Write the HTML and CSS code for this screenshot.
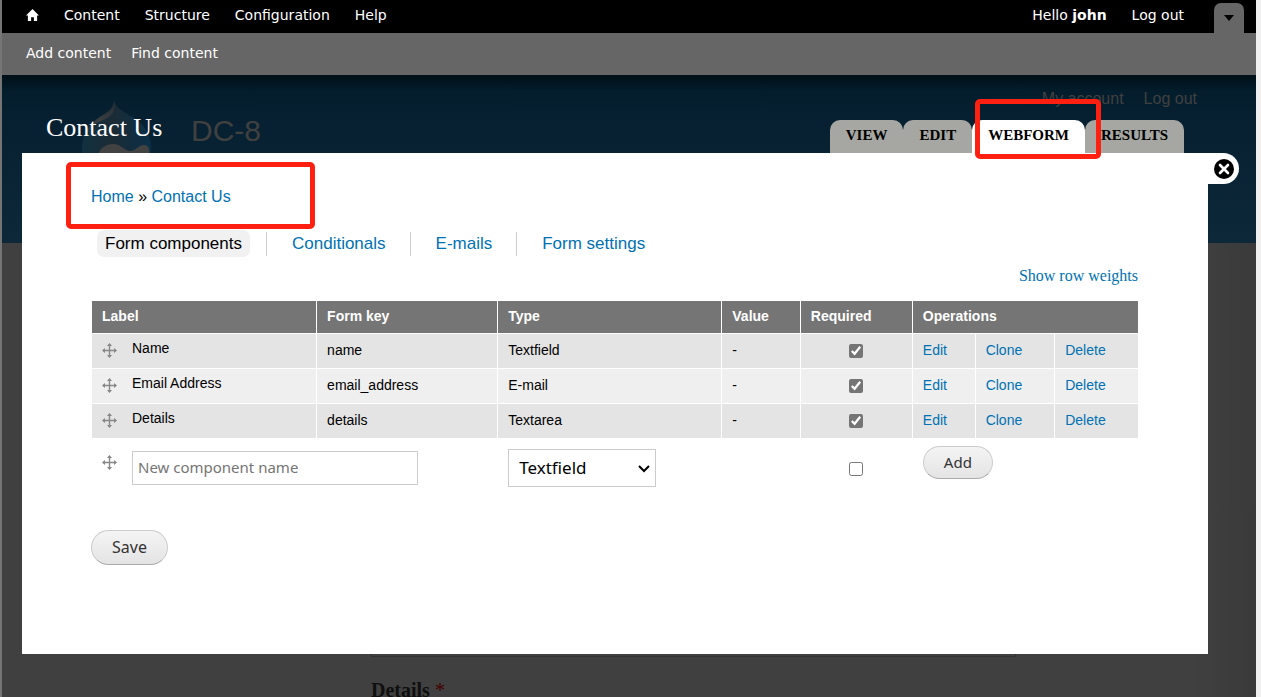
FILE: index.html
```html
<!DOCTYPE html>
<html lang="en">
<head>
    <meta charset="UTF-8">
    <meta name="viewport" content="width=device-width, initial-scale=1.0">
    <title>Contact Us | DC-8</title>
    <link rel="stylesheet" href="styles.css">
</head>
<body>
    <svg class="sprite" aria-hidden="true">
        <symbol id="drag" viewBox="0 0 15 15">
            <path d="M7.500 1v13M1 7.500h13" fill="none" stroke="currentColor" stroke-width="1.400"/>
            <path d="M7.500 0l2.500 3h-5zM7.500 15l2.500-3h-5zM0 7.500l3-2.500v5zM15 7.500l-3-2.500v5z" fill="currentColor"/>
        </symbol>
    </svg>
    <div class="screen">
        <div class="toolbar">
            <nav class="toolbar-menu">
                <a href="#" class="home" aria-label="Home">
                    <svg width="13" height="12" viewBox="0 0 14 13"><path d="M7 0L0 7h2v6h3.500V9h3v4H12V7h2z" fill="#fff"/></svg>
                </a>
                <a href="#">Content</a>
                <a href="#">Structure</a>
                <a href="#">Configuration</a>
                <a href="#">Help</a>
            </nav>
            <div class="toolbar-user">
                <a href="#">Hello <strong>john</strong></a>
                <a href="#">Log out</a>
                <button type="button" class="toggle" aria-label="Toggle shortcuts">
                    <svg width="10" height="6" viewBox="0 0 10 6"><path d="M0 0h10L5 6z" fill="#000"/></svg>
                </button>
            </div>
        </div>
        <div class="drawer">
            <a href="#">Add content</a>
            <a href="#">Find content</a>
        </div>

        <div class="stage">
            <!-- site page, dimmed behind the overlay -->
            <header class="site-header">
                <div class="branding">
                    <svg class="logo" width="70" height="80" viewBox="0 0 70 80">
                        <defs>
                            <linearGradient id="drop" x1="0" y1="0" x2="1" y2="0">
                                <stop offset="0" stop-color="#12303f"/>
                                <stop offset=".45" stop-color="#1b2b35"/>
                                <stop offset="1" stop-color="#0a3049"/>
                            </linearGradient>
                            <linearGradient id="shine" x1="0" y1="1" x2="1" y2="0">
                                <stop offset="0" stop-color="#1c323e"/>
                                <stop offset=".5" stop-color="#3b3d3e"/>
                                <stop offset="1" stop-color="#24303a"/>
                            </linearGradient>
                        </defs>
                        <path d="M32 0c2 8 8 11 17 16 12 7 20 17 20 32 0 19-15 32-34 32S0 66 0 48C0 34 7 25 17 17 26 11 31 9 32 0z" fill="url(#drop)"/>
                        <path d="M32 2c1 6 1 10-4 14-6 5-13 5-18 11-3 4-5 7-7 10 2-9 7-15 15-20 8-4 13-7 14-15z" fill="url(#shine)"/>
                        <path d="M16 55c2-7 8-11 15-11 8 0 12 7 17 7 6 0 9-7 15-6 4 1 5 5 4 10-3 11-13 17-25 17-15 0-28-6-26-17z" fill="#424242"/>
                    </svg>
                    <span class="site-name">DC-8</span>
                </div>
                <nav class="site-user">
                    <a href="#">My account</a>
                    <a href="#">Log out</a>
                </nav>
            </header>
            <main class="site-main">
                <input type="text" class="site-input" aria-label="Email Address">
                <label class="site-label" for="site-details">Details <span class="star">*</span></label>
                <textarea id="site-details" class="site-input"></textarea>
            </main>

            <div class="overlay">
                <div class="overlay-title">
                    <h1>Contact Us</h1>
                    <nav class="tabs">
                        <a href="#">View</a>
                        <a href="#">Edit</a>
                        <a href="#" class="active">Webform<span class="mark mark-tab"></span></a>
                        <a href="#">Results</a>
                    </nav>
                </div>
                <div class="panel">
                    <button type="button" class="close" aria-label="Close overlay">
                        <svg width="20" height="20" viewBox="0 0 20 20">
                            <circle cx="10" cy="10" r="10" fill="#000"/>
                            <path d="M6 6l8 8M14 6l-8 8" stroke="#fff" stroke-width="2.600" stroke-linecap="round"/>
                        </svg>
                    </button>
                    <nav class="breadcrumb">
                        <a href="#">Home</a> » <a href="#">Contact Us</a>
                        <span class="mark mark-crumb"></span>
                    </nav>
                    <nav class="secondary">
                        <a href="#" class="active">Form components</a>
                        <a href="#">Conditionals</a>
                        <a href="#">E-mails</a>
                        <a href="#">Form settings</a>
                    </nav>
                    <form>
                        <div class="weights"><a href="#">Show row weights</a></div>
                        <table class="components">
                            <colgroup>
                                <col class="c-label"><col class="c-key"><col class="c-type"><col class="c-value">
                                <col class="c-req"><col class="c-edit"><col class="c-clone"><col class="c-delete">
                            </colgroup>
                            <thead>
                                <tr>
                                    <th>Label</th>
                                    <th>Form key</th>
                                    <th>Type</th>
                                    <th>Value</th>
                                    <th>Required</th>
                                    <th colspan="3">Operations</th>
                                </tr>
                            </thead>
                            <tbody>
                                <tr class="odd">
                                    <td><div class="label-cell"><svg class="drag"><use href="#drag"/></svg><span>Name</span></div></td>
                                    <td>name</td>
                                    <td>Textfield</td>
                                    <td>-</td>
                                    <td class="check"><input type="checkbox" aria-label="Name required" checked></td>
                                    <td><a href="#">Edit</a></td>
                                    <td><a href="#">Clone</a></td>
                                    <td><a href="#">Delete</a></td>
                                </tr>
                                <tr class="even">
                                    <td><div class="label-cell"><svg class="drag"><use href="#drag"/></svg><span>Email Address</span></div></td>
                                    <td>email_address</td>
                                    <td>E-mail</td>
                                    <td>-</td>
                                    <td class="check"><input type="checkbox" aria-label="Email Address required" checked></td>
                                    <td><a href="#">Edit</a></td>
                                    <td><a href="#">Clone</a></td>
                                    <td><a href="#">Delete</a></td>
                                </tr>
                                <tr class="odd">
                                    <td><div class="label-cell"><svg class="drag"><use href="#drag"/></svg><span>Details</span></div></td>
                                    <td>details</td>
                                    <td>Textarea</td>
                                    <td>-</td>
                                    <td class="check"><input type="checkbox" aria-label="Details required" checked></td>
                                    <td><a href="#">Edit</a></td>
                                    <td><a href="#">Clone</a></td>
                                    <td><a href="#">Delete</a></td>
                                </tr>
                                <tr class="add-row">
                                    <td colspan="2"><div class="label-cell"><svg class="drag"><use href="#drag"/></svg><input type="text" class="new-name" placeholder="New component name" aria-label="New component name"></div></td>
                                    <td colspan="2">
                                        <div class="select-wrap">
                                            <select class="new-type" aria-label="Type">
                                                <option>Textfield</option>
                                                <option>E-mail</option>
                                                <option>Textarea</option>
                                            </select>
                                            <svg class="arrow" width="12" height="8" viewBox="0 0 12 8"><path d="M1 1l5 5 5-5" fill="none" stroke="#000" stroke-width="2"/></svg>
                                        </div>
                                    </td>
                                    <td class="check"><input type="checkbox" aria-label="New component required"></td>
                                    <td colspan="3"><button type="button" class="btn btn-add">Add</button></td>
                                </tr>
                            </tbody>
                        </table>
                        <button type="submit" class="btn btn-save">Save</button>
                    </form>
                </div>
            </div>
        </div>
    </div>
</body>
</html>
```

FILE: styles.css
```css
* {
    box-sizing: border-box;
}
body {
    margin: 0;
    height: 100vh;
    overflow: hidden;
    background-color: #f0f0f0;
    border-left: 2px solid #757575;
    font-family: "Liberation Sans", Arial, sans-serif;
    color: #000;
}
a {
    color: #0071b3;
    text-decoration: none;
}
.sprite {
    position: absolute;
    width: 0;
    height: 0;
}
.screen {
    display: flex;
    flex-direction: column;
    height: 100vh;
    margin-right: 5px;
}

/* toolbar */
.toolbar {
    display: flex;
    justify-content: space-between;
    height: 33px;
    padding: 0 12px 0 24px;
    background-color: #000;
}
.toolbar-menu,
.toolbar-user {
    display: flex;
    gap: 25px;
    line-height: 30px;
}
.toolbar-menu {
    height: 30px;
}
.toolbar a,
.drawer a {
    color: #fff;
    font-family: "DejaVu Sans", Verdana, sans-serif;
    font-size: 14px;
}
.toolbar .home {
    display: flex;
    align-items: center;
}
.toggle {
    align-self: flex-end;
    width: 30px;
    height: 30px;
    margin-left: 5px;
    padding: 0;
    border: none;
    border-radius: 7px 7px 0 0;
    background-color: #666;
    line-height: 0;
}
.drawer {
    display: flex;
    gap: 20px;
    height: 42px;
    padding: 0 24px;
    background-color: #666;
    line-height: 40px;
}

/* dimmed site */
.stage {
    position: relative;
    flex: 1;
    overflow: hidden;
    background: linear-gradient(to right, #404040 95%, #3a3a3a);
}
.site-header {
    display: flex;
    justify-content: space-between;
    height: 168px;
    padding: 0 59px 0 80px;
    background: linear-gradient(#000f17, #031d2c 16px, #062031 40px, #0d2838);
}
.branding {
    display: flex;
    gap: 39px;
    padding-top: 25px;
}
.site-name {
    color: #404040;
    font-size: 30px;
    line-height: 62px;
}
.site-user {
    display: flex;
    gap: 20px;
    padding-top: 14px;
}
.site-user a {
    color: #404040;
    font-size: 16px;
    line-height: 20px;
}
.site-main {
    display: flex;
    flex-direction: column;
    padding: 378px 240px 0 369px;
}
.site-input {
    height: 36px;
    border: 1px solid #333;
    background-color: transparent;
    resize: none;
}
.site-label {
    margin-top: 20px;
    color: #0f0f0f;
    font-family: "Liberation Serif", serif;
    font-size: 20px;
    font-weight: bold;
    line-height: 26px;
}
.star {
    color: #400;
    font-weight: normal;
}

/* overlay */
.overlay {
    position: absolute;
    top: 0;
    left: 20px;
    right: 48px;
}
.overlay-title {
    display: flex;
    justify-content: space-between;
    align-items: flex-end;
    height: 78px;
    padding: 0 24px;
}
.overlay-title h1 {
    margin: 0;
    padding-bottom: 10px;
    color: #fff;
    font-family: "Liberation Serif", serif;
    font-size: 26px;
    font-weight: normal;
    line-height: 30px;
}
.tabs {
    display: flex;
}
.tabs a {
    height: 33px;
    padding: 0 16px;
    border-radius: 10px 10px 0 0;
    background-color: #a6a7a2;
    color: #000;
    font-family: "Liberation Serif", serif;
    font-size: 15px;
    font-weight: bold;
    line-height: 30px;
    text-transform: uppercase;
}
.tabs .active {
    position: relative;
    background-color: #fff;
}
.mark {
    position: absolute;
    z-index: 2;
    border: 5px solid #ff2011;
    border-radius: 5px;
    pointer-events: none;
}
.mark-tab {
    inset: -21px -16px -6px 3px;
}
.mark-crumb {
    inset: -25px -84px -22px -25px;
}
.panel {
    position: relative;
    padding: 34px 70px 89px 69px;
    background-color: #fff;
}
.close {
    position: absolute;
    top: 0;
    right: -31px;
    width: 31px;
    height: 31px;
    padding: 5px;
    border: none;
    border-radius: 0 16px 16px 0;
    background-color: #fff;
    line-height: 0;
}
.breadcrumb {
    position: relative;
    width: fit-content;
    font-size: 16px;
    line-height: 20px;
}
.secondary {
    display: flex;
    margin: 23px 0 0 6px;
    font-size: 17px;
    line-height: 27px;
}
.secondary a {
    padding: 0 8px;
    border-radius: 7px;
}
.secondary a + a {
    position: relative;
    margin-left: 34px;
}
.secondary a + a::before {
    content: "";
    position: absolute;
    top: 2px;
    left: -18px;
    height: 24px;
    border-left: 1px solid #ccc;
}
.secondary .active {
    background-color: #f1f1f1;
    color: #000;
}
.weights {
    padding: 8px 0 14px;
    font-family: "Liberation Serif", serif;
    font-size: 16px;
    line-height: 22px;
    text-align: right;
}

/* component table */
.components {
    width: 100%;
    table-layout: fixed;
    border-collapse: separate;
    border-spacing: 0;
    font-size: 14px;
    line-height: 18px;
}
.c-label { width: 21.5%; }
.c-key { width: 17.3%; }
.c-type { width: 21.4%; }
.c-value { width: 7.5%; }
.c-req { width: 10.7%; }
.c-edit { width: 6%; }
.c-clone { width: 7.6%; }
.c-delete { width: 8%; }
.components th,
.components td {
    padding: 0 10px 2px;
    border: solid #fff;
    border-width: 0 0 1px 1px;
    text-align: left;
}
.components th {
    height: 33px;
    background-color: #757575;
    color: #fff;
}
.components td {
    height: 35px;
}
.odd td {
    background-color: #e4e4e4;
}
.even td {
    background-color: #efefef;
}
.components .check {
    text-align: center;
}
.check input {
    width: 14px;
    height: 14px;
    margin: 0;
    vertical-align: middle;
    accent-color: #757575;
}
.label-cell {
    display: flex;
    align-items: flex-start;
    gap: 15px;
}
.label-cell span {
    padding-bottom: 4px;
}
.drag {
    flex: none;
    width: 15px;
    height: 15px;
    margin-top: 4px;
    color: #888;
}
.components .add-row td {
    height: 60px;
}
.new-name {
    width: 286px;
    height: 34px;
    padding: 0 5px 2px;
    border: 1px solid #ccc;
    font-family: "Noto Sans", sans-serif;
    font-size: 15px;
}
.select-wrap {
    position: relative;
    width: 148px;
}
.new-type {
    display: block;
    width: 100%;
    height: 38px;
    padding: 0 10px;
    appearance: none;
    border: 1px solid #ccc;
    border-radius: 0;
    background-color: #fff;
    color: #000;
    font-family: "Noto Sans", sans-serif;
    font-size: 17px;
}
.arrow {
    position: absolute;
    top: 16px;
    right: 6px;
    pointer-events: none;
}
.btn {
    border: 1px solid #ccc;
    border-bottom-color: #aaa;
    border-radius: 18px;
    background: linear-gradient(#f4f4f4, #e4e4e4);
    color: #333;
    font-family: "Noto Sans", sans-serif;
}
.btn-add {
    display: block;
    height: 33px;
    margin-bottom: 10px;
    padding: 0 20px 2px;
    font-size: 15px;
}
.btn-save {
    height: 35px;
    margin-top: 31px;
    padding: 0 20px 2px;
    font-size: 16px;
}
```
